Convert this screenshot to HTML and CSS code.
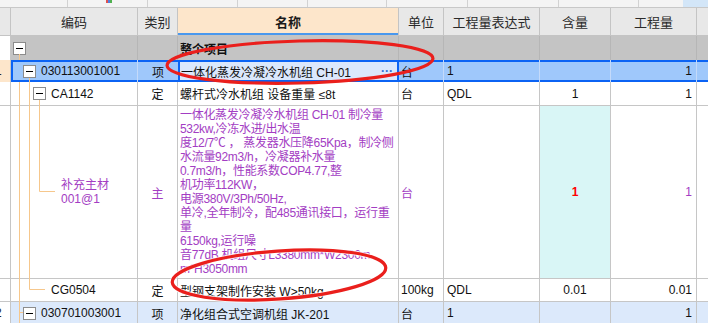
FILE: index.html
```html
<!DOCTYPE html>
<html lang="zh">
<head>
<meta charset="utf-8">
<title>清单</title>
<link rel="stylesheet" href="styles.css">
</head>
<body>
<div class="sheet">
  <div class="strip">
    <span class="s1"></span><span class="s2"><i class="ico"></i></span><span class="s3"></span><span class="s4"></span><span class="s5"></span><span class="s6"></span><span class="s7"></span><span class="s8"></span><span class="s9"></span><span class="s10"></span>
  </div>

  <div class="row head">
    <div class="c c0"></div>
    <div class="c c1">编码</div>
    <div class="c c2">类别</div>
    <div class="c c3">名称</div>
    <div class="c c4">单位</div>
    <div class="c c5">工程量表达式</div>
    <div class="c c6">含量</div>
    <div class="c c7">工程量</div>
    <div class="c c8"></div>
  </div>

  <div class="row grey">
    <div class="c c0"></div>
    <div class="c c1 lv0"><span class="tb"></span></div>
    <div class="c c2"></div>
    <div class="c c3 bold">整个项目</div>
    <div class="c c4"></div>
    <div class="c c5"></div>
    <div class="c c6"></div>
    <div class="c c7"></div>
    <div class="c c8"></div>
  </div>

  <div class="row sel">
    <div class="c c0"><span class="rn">1</span></div>
    <div class="c c1 lv1"><span class="tb"></span>030113001001</div>
    <div class="c c2">项</div>
    <div class="c c3 edit"><span>一体化蒸发冷凝冷水机组 CH-01</span><span class="more">···</span></div>
    <div class="c c4">台</div>
    <div class="c c5">1</div>
    <div class="c c6"></div>
    <div class="c c7">1</div>
    <div class="c c8"></div>
  </div>

  <div class="row r24">
    <div class="c c0"></div>
    <div class="c c1 lv2"><span class="tb"></span>CA1142</div>
    <div class="c c2">定</div>
    <div class="c c3">螺杆式冷水机组 设备重量 ≤8t</div>
    <div class="c c4">台</div>
    <div class="c c5">QDL</div>
    <div class="c c6">1</div>
    <div class="c c7">1</div>
    <div class="c c8"></div>
  </div>

  <div class="row tall purple">
    <div class="c c0"></div>
    <div class="c c1 lv3"><div class="two">补充主材<br>001@1</div></div>
    <div class="c c2">主</div>
    <div class="c c3 desc">一体化蒸发冷凝冷水机组 CH-01 制冷量<br>532kw,冷冻水进/出水温<br>度12/7℃ ， 蒸发器水压降65Kpa，制冷侧<br>水流量92m3/h，冷凝器补水量<br>0.7m3/h，性能系数COP4.77,整<br>机功率112KW，<br>电源380V/3Ph/50Hz,<br>单冷,全年制冷，配485通讯接口，运行重<br>量<br>6150kg,运行噪<br>音77dB,机组尺寸L3380mm*W2300m<br>m*H3050mm</div>
    <div class="c c4">台</div>
    <div class="c c5"></div>
    <div class="c c6 cyan"><b class="red">1</b></div>
    <div class="c c7">1</div>
    <div class="c c8"></div>
  </div>

  <div class="row r23">
    <div class="c c0"></div>
    <div class="c c1 lv2t">CG0504</div>
    <div class="c c2">定</div>
    <div class="c c3">型钢支架制作安装 W&gt;50kg</div>
    <div class="c c4">100kg</div>
    <div class="c c5">QDL</div>
    <div class="c c6">0.01</div>
    <div class="c c7">0.01</div>
    <div class="c c8"></div>
  </div>

  <div class="row last">
    <div class="c c0"><span class="rn">2</span></div>
    <div class="c c1 lv1"><span class="tb"></span>030701003001</div>
    <div class="c c2">项</div>
    <div class="c c3">净化组合式空调机组 JK-201</div>
    <div class="c c4">台</div>
    <div class="c c5">1</div>
    <div class="c c6"></div>
    <div class="c c7">1</div>
    <div class="c c8"></div>
  </div>

  <svg class="tree" width="708" height="323" viewBox="0 0 708 323">
    <path d="M19.5 54V60M19.5 82V323M19.5 312.5H23M29.5 78V289.5H45M39.5 100V191.5H55" fill="none" stroke="#f6c78c" stroke-width="1"/>
  </svg>

  <svg class="marks" width="708" height="323" viewBox="0 0 708 323">
    <ellipse cx="300" cy="62" rx="133" ry="21" transform="rotate(-1.5 300 62)" fill="none" stroke="#ea1f1c" stroke-width="3.2"/>
    <ellipse cx="279" cy="275" rx="107" ry="24" transform="rotate(-4 279 275)" fill="none" stroke="#ffffff" stroke-width="5" opacity="0.8"/>
    <ellipse cx="279" cy="275" rx="107" ry="24" transform="rotate(-4 279 275)" fill="none" stroke="#ea1f1c" stroke-width="3.2"/>
  </svg>
</div>
</body>
</html>
```

FILE: styles.css
```css
body {
  margin: 0;
  background: #ffffff;
}

.sheet {
  position: relative;
  width: 708px;
  height: 323px;
  overflow: hidden;
  font-family: "Liberation Sans", "Noto Sans CJK SC", sans-serif;
  font-size: 12px;
  color: #111111;
}

/* top strip (previous header row, cut) */
.strip {
  display: flex;
  box-sizing: border-box;
  height: 8px;
  background: #f4f4f4;
  border-bottom: 1px solid #c8c8c8;
}
.strip span {
  box-sizing: border-box;
  border-right: 1px solid #d2d2d2;
  position: relative;
}
.strip .s1 { width: 68px; }
.strip .s2 { width: 80px; }
.strip .s3 { width: 90px; }
.strip .s4 { width: 70px; }
.strip .s5 { width: 79px; }
.strip .s6 { width: 81px; }
.strip .s7 { width: 91px; }
.strip .s8 { width: 80px; }
.strip .s9 { width: 44px; border-right: 0; }
.strip .s10 { flex: 1; border-right: 0; background: #d3e6f8; }
.strip .ico {
  position: absolute;
  left: 38px;
  top: 0;
  width: 6px;
  height: 3px;
  background: linear-gradient(90deg, #e05050 0 2px, #5080e0 2px 4px, #50b050 4px 6px);
}

/* rows */
.row {
  display: flex;
  box-sizing: border-box;
  border-bottom: 1px solid #c6c6c6;
}

.c {
  box-sizing: border-box;
  border-right: 1px solid #c6c6c6;
  display: flex;
  align-items: center;
  white-space: nowrap;
  overflow: hidden;
}
.c0 { width: 11px; }
.c1 { width: 127px; }
.c2 { width: 40px; justify-content: center; }
.c3 { width: 221px; padding-left: 2px; }
.c4 { width: 45px; padding-left: 2px; }
.c5 { width: 96px; padding-left: 3px; }
.c6 { width: 71px; justify-content: center; }
.c7 { width: 86px; justify-content: flex-end; padding-right: 4px; }
.c8 { flex: 1; border-right: 0; }

.rn {
  margin-left: -5px;
  color: #222222;
}

/* header */
.head {
  height: 28px;
  border-bottom-color: #c4c4c4;
}
.head .c {
  background: #e8e8e8;
  justify-content: center;
  font-family: "Noto Sans CJK SC", sans-serif;
  font-size: 13px;
  color: #2a2a2a;
  border-right-color: #c4c4c4;
  padding: 0;
}
.head .c3 {
  background: #fde6cb;
  font-weight: bold;
  color: #1a1a1a;
  box-shadow: inset 0 -2px 0 #4a98ee;
}

/* whole-project row */
.grey {
  height: 24px;
  border-bottom: 0;
}
.grey .c {
  background: #c4c4c4;
  border-right-color: #b6b6b6;
}
.grey .c0 {
  background: #ffffff;
  border-right-color: #c6c6c6;
}
.bold {
  font-weight: bold;
}

/* selected row */
.sel {
  height: 22px;
  border-bottom: 0;
}
.sel .c {
  background: #9fc8fb;
  border-right-color: #c4dafa;
  box-shadow: inset 0 2px 0 #0b63f4, inset 0 -2px 0 #0b63f4;
}
.sel .c0 {
  background: #fde6cb;
  box-shadow: none;
  border-right-color: #c6c6c6;
}
.sel .c1 {
  box-shadow: inset 2px 0 0 #0b63f4, inset 0 2px 0 #0b63f4, inset 0 -2px 0 #0b63f4;
}
.sel .c2 {
  border-right: 0;
}
.sel .c3.edit {
  background: #dbe8fc;
  justify-content: space-between;
  padding-left: 3px;
  padding-right: 6px;
  border-right: 0;
  box-shadow: inset 2px 0 0 #0b63f4, inset -2px 0 0 #0b63f4, inset 0 2px 0 #0b63f4, inset 0 -2px 0 #0b63f4;
}
.more {
  color: #2f6fd6;
  font-weight: bold;
}

/* regular rows */
.r24 { height: 24px; }
.r23 { height: 23px; }
.tall { height: 173px; }
.last {
  height: 22px;
  border-bottom: 0;
}
.last .c {
  background: #dce9fb;
}
.last .c0 {
  background: #ffffff;
}

/* tree indentation */
.lv0 { padding-left: 2px; }
.lv1 { padding-left: 12px; }
.lv2 { padding-left: 22px; }
.lv2t { padding-left: 40px; }
.lv3 { padding-left: 50px; }

.tb {
  flex: none;
  position: relative;
  box-sizing: border-box;
  width: 13px;
  height: 13px;
  margin-right: 5px;
  border: 1px solid #8c8c8c;
  background: #ffffff;
}
.tb::after {
  content: "";
  position: absolute;
  left: 2px;
  right: 2px;
  top: 5px;
  height: 1px;
  background: #000000;
}

/* material row */
.purple .c {
  color: #a33dc3;
}
.two {
  line-height: 14px;
}
.desc {
  display: block;
  padding-top: 2px;
  line-height: 14px;
  letter-spacing: -0.3px;
}
.cyan {
  background: #d9f6f6;
}
.red {
  color: #ff0000;
  font-weight: bold;
}

/* overlays */
.tree,
.marks {
  position: absolute;
  left: 0;
  top: 0;
  pointer-events: none;
}
```
